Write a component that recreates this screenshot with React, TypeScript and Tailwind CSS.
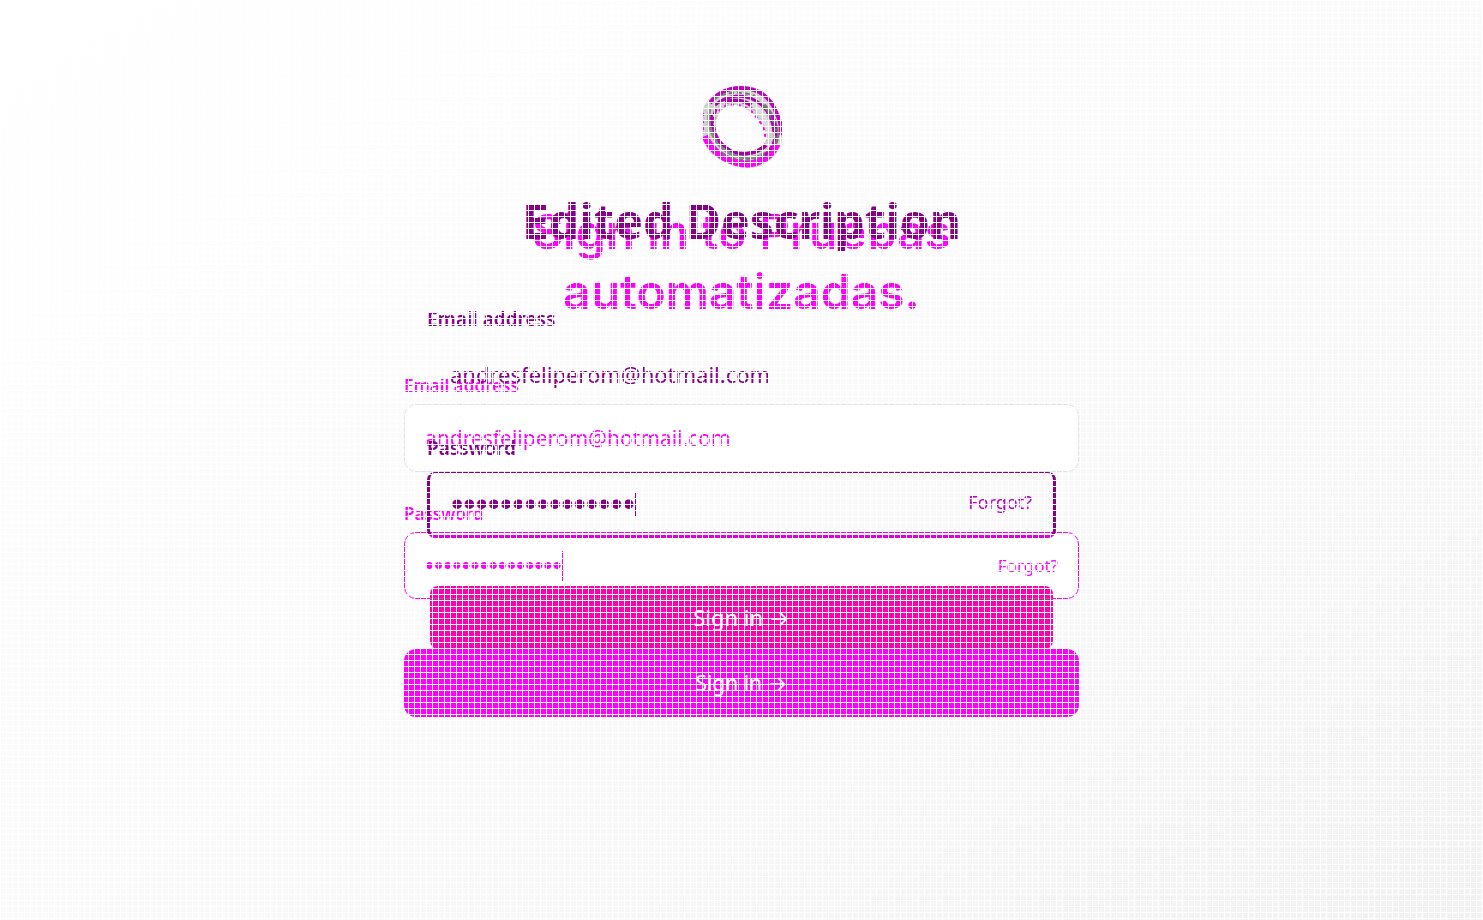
import React from "react";

function Ring() {
  return (
    <svg className="h-[84px] w-[80px]" viewBox="0 0 80 84" fill="none" aria-hidden="true">
      <path fillRule="evenodd" fill="#cfcfcf" d="M36 1C53 -1 69 9 75 25C82 42 83 57 74 69C64 83 47 86 31 80C13 75 0 63 0 47V28C2 14 18 3 36 1ZM39 21C24 17 15 27 13 41C15 54 25 67 37 68C51 69 61 65 65 52C60 37 51 27 39 21Z" />
      <path stroke="#c400c4" strokeWidth="4" d="M8 18C15 8 26 3 39 3C57 3 69 13 74 27C78 35 80 42 79 50" />
      <path stroke="#b000b0" strokeWidth="3" d="M13 20C26 9 43 9 54 16C66 23 71 34 72 47" />
      <path stroke="#a800a8" strokeWidth="4" d="M23 17C35 13 47 17 56 25M64 60C54 70 35 72 24 63C13 55 8 43 9 29" />
      <path stroke="#777777" strokeWidth="4" d="M62 20C69 28 76 38 75 52C74 61 68 68 59 71" />
      <path stroke="#dddddd" strokeWidth="5" d="M50 19C59 26 65 37 67 48" />
      <path stroke="#888888" strokeWidth="3" d="M8 23C4 40 11 57 24 66C33 72 47 75 58 71" />
      <path stroke="#ff00ff" strokeWidth="7" d="M3 51C11 70 30 79 47 79C60 77 70 70 75 59" />
      <path stroke="#c000c0" strokeWidth="3" strokeDasharray="6 2" d="M14 24C9 38 12 51 21 61M70 30C78 49 72 63 60 73" />
      <path stroke="#777777" strokeWidth="2" strokeDasharray="5 3" d="M12 14C26 5 42 7 53 11M21 69C34 76 50 77 63 70" />
      <path stroke="#ff00ff" strokeWidth="2" strokeDasharray="3 4" d="M17 26C23 16 43 18 52 29C58 38 64 42 63 54M1 28V47M80 39V54" />
    </svg>
  );
}

function Arrow() {
  return <span className="font-['Inter',sans-serif]">→</span>;
}

function BaseForm() {
  return (
    <form className="col-start-1 row-start-1 mx-auto w-full max-w-[675px] pt-[202px] text-[#ff00ff]" onSubmit={(e) => e.preventDefault()}>
      <h2 className="text-center text-5xl/[60px] font-semibold font-['Inter',sans-serif]">Sign in to Pruebas<br />automatizadas.</h2>
      <label htmlFor="base-email" className="mt-[52px] block text-[17px]/6 font-semibold">Email address</label>
      <input id="base-email" type="email" defaultValue="andresfeliperom@hotmail.com" className="mt-1.5 block h-[68px] w-full rounded-xl border border-[#e2e2e2] bg-white px-5 text-[21px] outline-none" />
      <label htmlFor="base-password" className="mt-[30px] block text-[17px]/6 font-semibold">Password</label>
      <div className="mt-1.5 flex h-[67px] items-center rounded-xl border border-[#ff00ff] bg-white px-5">
        <input id="base-password" type="password" defaultValue="123456789012345" className="field-sizing-content text-[26px] font-['Liberation_Sans',sans-serif] outline-none" />
        <span className="h-[30px] w-px bg-[#ff00ff]" />
        <a href="#forgot" className="ml-auto text-[17px]">Forgot?</a>
      </div>
      <button className="mt-[50px] h-[68px] w-full rounded-xl bg-[#ff00ff] pt-0.5 text-[21px] text-white">Sign in <Arrow /></button>
    </form>
  );
}

function TopForm() {
  return (
    <form className="col-start-1 row-start-1 mx-auto w-full max-w-[629px] pt-[85px] text-[#880088]" onSubmit={(e) => e.preventDefault()}>
      <div className="flex justify-center"><Ring /></div>
      <h1 className="mt-[22px] text-center text-5xl/[60px] font-bold">Edited Description</h1>
      <label htmlFor="top-email" className="mt-[56px] block text-[19px]/6 font-semibold">Email address</label>
      <input id="top-email" type="email" defaultValue="andresfeliperom@hotmail.com" className="mt-2.5 block h-[66px] w-full bg-transparent px-[23px] text-[22px] outline-none" />
      <label htmlFor="top-password" className="mt-[29px] block text-[19px]/6 font-semibold">Password</label>
      <div className="mt-3 flex h-[66px] items-center rounded-lg border-x-3 border-t border-b-3 border-[#880088] border-b-[#e000e0] px-[21px]">
        <input id="top-password" type="password" defaultValue="123456789012345" className="field-sizing-content text-[35px] font-['Liberation_Sans',sans-serif] outline-none" />
        <span className="h-6 w-px bg-[#880088]" />
        <a href="#forgot-password" className="ml-auto pb-1 text-lg text-[#c000c0]">Forgot?</a>
      </div>
      <div className="mt-12 px-[3px]">
        <button className="block h-[63px] w-full rounded-lg bg-[#ff00b0] bg-[linear-gradient(transparent_12px,#777777_12px,#777777_13px,transparent_13px)] text-[22px] text-white">Sign in <Arrow /></button>
      </div>
    </form>
  );
}

export default function App() {
  return (
    <main className="relative grid min-h-screen content-start overflow-hidden bg-linear-to-br from-white via-[#fafafa] to-[#f2f2f2] font-['Noto_Sans',sans-serif]">
      <BaseForm />
      <TopForm />
      <div className="pointer-events-none absolute inset-0 bg-[linear-gradient(to_right,white_1px,transparent_1px),linear-gradient(to_bottom,white_1px,transparent_1px)] bg-size-[6px_6px]" />
    </main>
  );
}
